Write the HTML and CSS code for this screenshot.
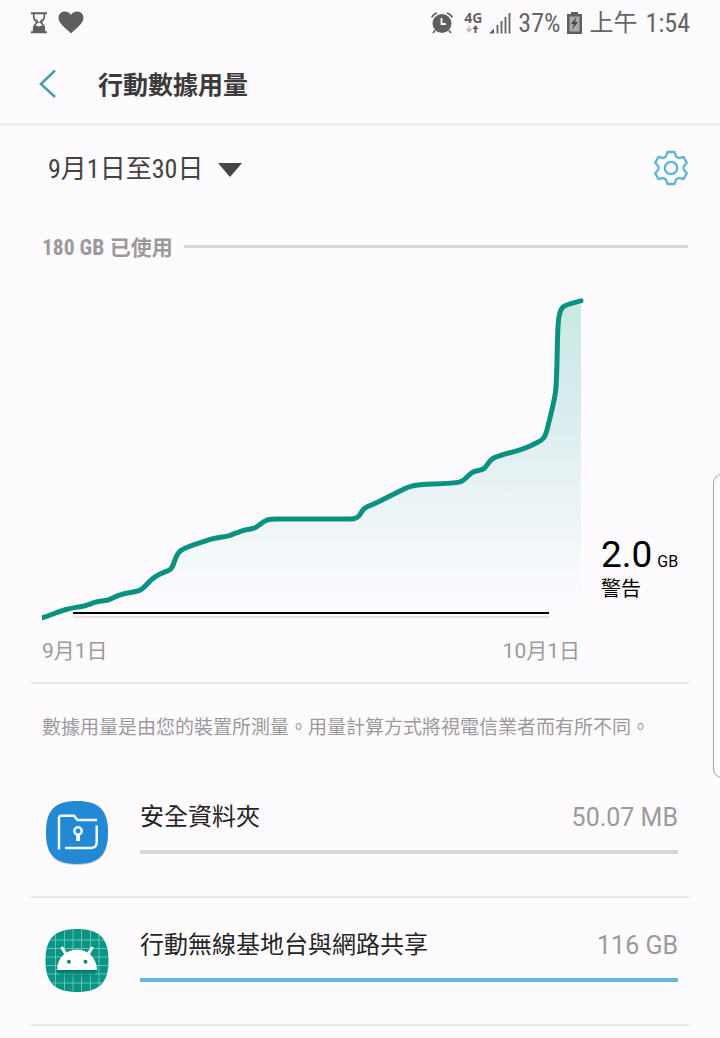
FILE: index.html
```
<!DOCTYPE html>
<html lang="zh-Hant">
<head>
    <meta charset="UTF-8">
    <meta name="viewport" content="width=device-width, initial-scale=1.0">
    <title>行動數據用量</title>
    <link rel="stylesheet" href="styles.css">
</head>
<body>

<!-- Status bar -->
<div class="status-bar">
    <div class="status-left">
        <svg class="hourglass" width="18" height="22" viewBox="0 0 18 22">
            <path d="M1 1.200h16M1 20.300h16" stroke="#5f605e" stroke-width="2"/>
            <path d="M3.700 1v4.500Q4 8 7 10.700Q4 13 3.700 16v4M14.300 1v4.500Q14 8 11 10.700Q14 13 14.300 16v4" fill="none" stroke="#5f605e" stroke-width="1.700"/>
            <path d="M3.500 14.500l3-1 2.500 1 2.500-1 3 1V20h-11zM5 6.500l2 .8h4l2-.8-3 4.500H8z" fill="#5f605e"/>
            <path d="M6.500 6.500h5L9 11z" fill="#fefbff"/>
        </svg>
        <svg width="26" height="23" viewBox="0 0 26 23">
            <path d="M13 22.500C9 18 .5 13 .5 7 .5 3 3.200.5 6.700.5 9.500.5 12 2 13 4 14 2 16.500.5 19.300.5 22.800.5 25.500 3 25.500 7c0 6-8.500 11-12.500 15.500z" fill="#5f605e"/>
        </svg>
    </div>
    <div class="status-right">
        <svg class="alarm" width="22" height="22" viewBox="0 0 22 22">
            <circle cx="11" cy="11.500" r="9.500" fill="#5f605e"/>
            <path d="M.8 5.500Q2 2.200 6 1M21.200 5.500Q20 2.200 16 1M4 18.500L2 21M18 18.500l2 2.500" fill="none" stroke="#5f605e" stroke-width="1.800"/>
            <path d="M10.500 6v6h4.500" fill="none" stroke="#fefbff" stroke-width="1.800"/>
        </svg>
        <div class="network">
            <span>4G</span>
            <svg width="13" height="8" viewBox="0 0 13 8">
                <path d="M3 0v5M.5 4h5L3 7.500z" stroke="#bbb" fill="#bbb"/>
                <path d="M9.500 8V3" stroke="#5f605e" stroke-width="2"/>
                <path d="M6.500 4l3-4 3 4z" fill="#5f605e"/>
            </svg>
        </div>
        <svg class="signal" width="22" height="22" viewBox="0 0 22 22">
            <path d="M0 21.500l5-5v5z" fill="#5f605e"/>
            <path d="M8.500 21.500V13M12.500 21.500V9M16.500 21.500V5M20.500 21.500V1" stroke="#6b6b6b" stroke-width="1.900"/>
        </svg>
        <span class="narrow battery-text">37%</span>
        <svg class="battery" width="15" height="22" viewBox="0 0 15 22">
            <path d="M4 0h7v2h4v20H0V2h4z" fill="#5f605e"/>
            <path d="M2.500 4.500h10v15h-10z" fill="#aaa9aa"/>
            <path d="M9.500 5L4 12h3l-2 5.500 6-7.500H8z" fill="#454645"/>
        </svg>
        <span class="ampm">上午</span>
        <span class="narrow clock">1:54</span>
    </div>
</div>

<header>
    <svg class="back" width="18" height="30" viewBox="0 0 18 30">
        <path d="M16 1.500L1.900 15l14.100 13" fill="none" stroke="#4a9db0" stroke-width="2.500"/>
    </svg>
    <h1>行動數據用量</h1>
</header>

<main>
    <div class="range-row">
        <div class="range"><span class="narrow">9</span>月<span class="narrow">1</span>日至<span class="narrow">30</span>日</div>
        <div class="dropdown-arrow"></div>
        <svg class="gear" width="36" height="36" viewBox="-18 -18 36 36" fill="none" stroke="#5fb6cf" stroke-width="2.300" stroke-linejoin="round">
            <circle r="6.200"/>
            <path d="M-3.500-16H3.500L5.300-11.200L7.800-9.900L12.500-11.200L15.800-5.200L12.600-1.400V1.400L15.800 5.200L12.500 11.200L7.800 9.900L5.300 11.200L3.500 16H-3.500L-5.300 11.200L-7.800 9.900L-12.500 11.200L-15.800 5.200L-12.600 1.400V-1.400L-15.800-5.200L-12.500-11.200L-7.800-9.900L-5.300-11.200Z"/>
        </svg>
    </div>

    <div class="usage-row">
        <span class="usage"><span class="narrow">180 GB</span>已使用</span>
        <span class="usage-line"></span>
    </div>

    <!-- Usage chart -->
    <div class="chart-row">
        <svg width="545" height="335" viewBox="42 290 545 335">
            <defs>
                <linearGradient id="fill" gradientUnits="userSpaceOnUse" x1="0" y1="300" x2="0" y2="605">
                    <stop offset="0" stop-color="#c8e9e2"/>
                    <stop offset=".3" stop-color="#d6ebec"/>
                    <stop offset=".6" stop-color="#e8f2f5"/>
                    <stop offset=".8" stop-color="#f2f7f8"/>
                    <stop offset="1" stop-color="#fcfbff"/>
                </linearGradient>
            </defs>
            <path fill="url(#fill)" d="M42 618C52 615 60 610 67 609L85 605.500L97 602L108 600L121 595L140 590L154 578L171 569L181 550L212 539L242 531L268 520H350L366 507L408 487L463 481L493 458L543 439L556 390L558 330L562 309L581 301V605H42Z"/>
            <path d="M73 617h476" stroke="#e6e4e6" stroke-width="2"/>
            <path d="M73 613h476" stroke="#000" stroke-width="2"/>
            <path fill="none" stroke="#0a9280" stroke-width="5" d="M40 618.300C50 616 60 610.500 67 609.200C73 607.700 79 607 85 605.700C90 604.500 93 602.500 97 601.800C101 601 104 601 108 600C113 598.500 116 596 121 594.600C128 592.700 134 592.200 139 590.600C144 589 149 580.500 155 577C161 572.500 166 572 170 569.600C175 566 174 555 181 550.300C187 546.500 202 542.300 211 539.200C217 537.500 224 537 230 535.300C234 534 238 532 242 530.800C246 529.500 250 529.500 254 528.200C259 526.500 263 520.500 269 519.500C271 519 274 519 277 519H350C355 519 358 518 360 514.500C362 511 363 508.500 367 506.800C371 505.300 374 504 378 502L406 488C411 485.600 416 484.800 423 484.400C436 483.800 452 483.800 460 481.900C465 480.700 469 473.500 474 471.700C478 470.200 481 470.800 484 468.600C488 465 489 459.500 495 457.300C504 454 514 452 523 448.900C531 446 536 443 541 440.400C545 438 547 431 548 426C551 413 555.500 398 556 387C557.500 361 557 345 558 326C558.700 315 560 309.500 563 307C567 304 574 303 580 301"/>
            <circle cx="581" cy="300.800" r="2.500" fill="#0a9280"/>
        </svg>
        <div class="warning">
            <div class="limit">2.0<small>GB</small></div>
            <div>警告</div>
        </div>
    </div>
    <div class="chart-dates">
        <span>9月1日</span>
        <span>10月1日</span>
    </div>

    <p class="note">數據用量是由您的裝置所測量。用量計算方式將視電信業者而有所不同。</p>

    <!-- Apps -->
    <div class="app">
        <svg class="app-icon" width="64" height="66" viewBox="0 0 64 66">
            <path d="M32 2C54 2 63 11 63 33.500S54 65 32 65 1 56 1 33.500 10 2 32 2z" fill="#c9d2dc"/>
            <path d="M32 1C54 1 63 10 63 32.300S54 64 32 64 1 55 1 32.300 10 1 32 1z" fill="#2389d5"/>
            <g fill="none" stroke="#f1f8fd" stroke-width="2.500">
                <path d="M14 49.500V18Q14 15.700 16.300 15.700H29L32.500 20H52"/>
                <path d="M51.700 25.500V42Q51.700 48 46 48H20"/>
                <circle cx="33" cy="31" r="3.700"/>
                <path d="M33 34v7" stroke-width="4"/>
            </g>
        </svg>
        <div class="app-info">
            <div class="app-title"><span>安全資料夾</span><span class="amount">50.07 MB</span></div>
            <div class="bar"></div>
        </div>
    </div>
    <div class="app">
        <svg class="app-icon" width="64" height="66" viewBox="0 0 64 66">
            <defs>
                <clipPath id="tile"><path d="M32 1C54 1 63.500 10 63.500 32.500S54 64 32 64 .5 55 .5 32.500 10 1 32 1z"/></clipPath>
                <linearGradient id="shade" x1="0" y1="0" x2="0" y2="1">
                    <stop offset="0" stop-color="#037466"/>
                    <stop offset="1" stop-color="#069684" stop-opacity="0"/>
                </linearGradient>
            </defs>
            <g clip-path="url(#tile)">
                <path d="M0 0h64v66H0z" fill="#089583"/>
                <path d="M10.500 0v66M19.500 0v66M28 0v66M36.500 0v66M45.500 0v66M54 0v66M0 12h64M0 20.500h64M0 29h64M0 37.500h64M0 46h64M0 55h64" stroke="#6fc5b9" stroke-width=".9"/>
                <path d="M12 42h40l-5 9H17z" fill="url(#shade)"/>
            </g>
            <path d="M12 42A20 20.500 0 0 1 52 42z" fill="#fff"/>
            <path d="M20.500 25.500L16.500 19M43.500 25.500L47.500 19" stroke="#fff" stroke-width="3"/>
            <circle cx="24" cy="33.800" r="2" fill="#078878"/>
            <circle cx="40.500" cy="33.800" r="2" fill="#078878"/>
        </svg>
        <div class="app-info">
            <div class="app-title"><span>行動無線基地台與網路共享</span><span class="amount">116 GB</span></div>
            <div class="bar full"></div>
        </div>
    </div>
</main>

<!-- Edge panel handle -->
<div class="edge-handle"></div>

</body>
</html>
```

FILE: styles.css
```
* {
    margin: 0;
    padding: 0;
    box-sizing: border-box;
}

body {
    font-family: Roboto, 'Noto Sans CJK TC', sans-serif;
    background-color: #fefbff;
    color: #252525;
    height: 1038px;
    overflow: hidden;
    position: relative;
}

svg {
    display: block;
    flex-shrink: 0;
}

.narrow {
    font-family: 'Roboto Condensed', Roboto, sans-serif;
    font-stretch: 75%;
}

.status-bar {
    height: 45px;
    padding: 0 30px;
    display: flex;
    justify-content: space-between;
    color: #656465;
    font-size: 26px;
    line-height: 45px;
}

.status-left,
.status-right {
    display: flex;
    align-items: center;
}

.status-left {
    gap: 10px;
}

.network {
    width: 18px;
    margin: 0 7px 0 11px;
    font: bold 14px/12px 'Open Sans', sans-serif;
}

.network svg {
    margin: 1px 0 0 2px;
}

.battery-text {
    margin: 0 7px;
    padding-top: 2px;
}

.clock {
    padding-top: 2px;
}

.ampm {
    font-size: 24px;
    margin: 0 8px 0 7px;
    padding-top: 2px;
}

header {
    height: 81px;
    padding-left: 39px;
    display: flex;
    align-items: center;
    gap: 41px;
    border-bottom: 3px solid #efecef;
}

header h1 {
    font-size: 25px;
    font-weight: bold;
    color: #3a3a3a;
    padding-bottom: 2px;
}

.range-row {
    height: 84px;
    padding: 0 31px 0 48px;
    display: flex;
    align-items: center;
}

.range {
    font-size: 26px;
    color: #424342;
    white-space: nowrap;
    padding-bottom: 3px;
}

.dropdown-arrow {
    margin: 3px 0 0 15px;
    border: 12px solid transparent;
    border-top: 14px solid #444644;
    border-bottom: 0;
}

.gear {
    margin-left: auto;
}

.usage-row {
    height: 80px;
    padding: 0 32px 7px 42px;
    display: flex;
    align-items: center;
    gap: 11px;
}

.usage {
    font-size: 21px;
    font-weight: bold;
    color: #9b999a;
    white-space: nowrap;
    padding-bottom: 2px;
}

.usage .narrow {
    font-size: 21.500px;
    margin-right: 5.500px;
}

.usage-line {
    flex: 1;
    height: 3px;
    background-color: #d8d5d9;
}

.chart-row {
    height: 335px;
    padding-left: 42px;
    display: flex;
}

.warning {
    margin: 243px 0 0 14px;
    font-size: 20px;
    line-height: 25px;
    color: #000;
    white-space: nowrap;
}

.limit {
    height: 44px;
    font-size: 37px;
    line-height: 43px;
}

.limit small {
    font-size: 16px;
    margin-left: 5px;
}

.chart-dates {
    width: 658px;
    height: 59px;
    margin-left: 31px;
    padding: 0 109px 9px 11px;
    display: flex;
    justify-content: space-between;
    align-items: center;
    border-bottom: 2px solid #e8e5e8;
    font-size: 21px;
    color: #9c999c;
}

.note {
    height: 86px;
    padding-left: 42px;
    font-size: 19px;
    line-height: 88px;
    color: #9c999c;
    white-space: nowrap;
}

.app {
    width: 658px;
    height: 128px;
    margin-left: 31px;
    padding: 30px 11px 0 14px;
    display: flex;
    gap: 31px;
    border-bottom: 2px solid #e8e5e8;
}

.app-info {
    flex: 1;
}

.app-title {
    height: 50px;
    line-height: 35px;
    display: flex;
    justify-content: space-between;
    font-size: 24px;
}

.amount {
    font-size: 25px;
    color: #9c999c;
}

.bar {
    height: 4px;
    background-color: #d7d6d9;
}

.bar.full {
    background-color: #62b9d9;
}

/* lies over the page, half off screen */
.edge-handle {
    position: absolute;
    top: 474px;
    right: -12px;
    width: 19px;
    height: 304px;
    border: 1px solid #a5a3a6;
    border-radius: 9px;
    background-color: #fefbff;
}
```
